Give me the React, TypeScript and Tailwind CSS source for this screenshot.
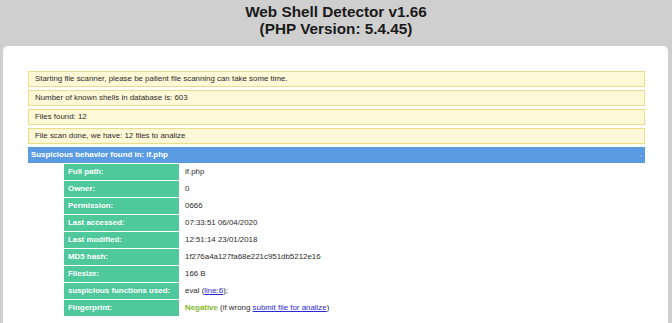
import React from "react";

const rows: { label: string; value: React.ReactNode }[] = [
  { label: "Full path:", value: "if.php" },
  { label: "Owner:", value: "0" },
  { label: "Permission:", value: "0666" },
  { label: "Last accessed:", value: "07:33:51 06/04/2020" },
  { label: "Last modified:", value: "12:51:14 23/01/2018" },
  { label: "MD5 hash:", value: "1f276a4a127fa68e221c951db5212e16" },
  { label: "Filesize:", value: "166 B" },
  {
    label: "suspicious functions used:",
    value: (
      <span>
        eval (<span className="text-[#2a2ad0] underline">line:6</span>);
      </span>
    ),
  },
  {
    label: "Fingerprint:",
    value: (
      <span>
        <span className="font-bold text-[#86b52c]">Negative</span> (if wrong{" "}
        <span className="text-[#2a2ad0] underline">submit file for analize</span>)
      </span>
    ),
  },
];

const notices = [
  "Starting file scanner, please be patient file scanning can take some time.",
  "Number of known shells in database is: 603",
  "Files found: 12",
  "File scan done, we have: 12 files to analize",
];

export default function App() {
  return (
    <div
      className="w-[672px] h-[323px] overflow-hidden bg-[#cfcfcf] flex flex-col"
      style={{ fontFamily: '"Liberation Sans", Arial, sans-serif' }}
    >
      <div className="pt-[3px] text-center font-bold text-[15.3px] leading-[17px] text-[#1a1a1a]">
        <div>Web Shell Detector v1.66</div>
        <div>(PHP Version: 5.4.45)</div>
      </div>
      <div className="mt-[9px] ml-[3px] mr-[4px] flex-1 bg-white rounded-t-[5px] pt-[25px] pl-[25px] pr-[23px]">
        <div className="flex flex-col gap-[3px] text-[7.9px] text-[#2b2b2b]">
          {notices.map((n) => (
            <div
              key={n}
              className="h-[16px] flex items-center border border-[#e9dd8a] bg-[#fff8d6] pl-[6px]"
            >
              {n}
            </div>
          ))}
          <div className="h-[16px] flex items-center justify-between bg-[#5b9be2] pl-[3px] pr-[3px] text-white font-bold">
            <span>Suspicious behavior found in: if.php</span>
            <span className="text-[#b9d2f2] text-[6px]">-</span>
          </div>
        </div>
        <div className="mt-[1px] ml-[36px] flex flex-col gap-[1px] text-[7.9px]">
          {rows.map((r) => (
            <div key={r.label} className="h-[16px] flex items-center">
              <div className="w-[115px] h-full flex items-center bg-[#4fc89c] text-white font-bold pl-[4px]">
                {r.label}
              </div>
              <div className="pl-[6px] text-[#2b2b2b]">{r.value}</div>
            </div>
          ))}
        </div>
      </div>
    </div>
  );
}
